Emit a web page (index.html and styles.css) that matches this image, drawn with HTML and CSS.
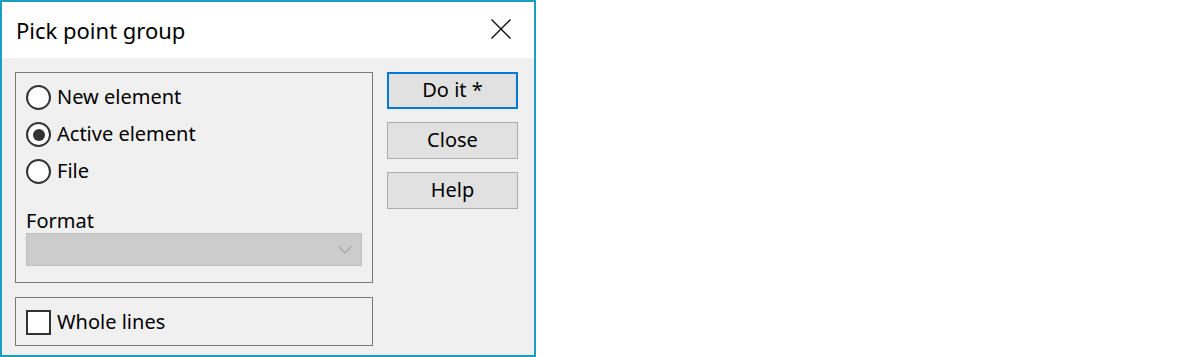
FILE: index.html
```html
<!DOCTYPE html>
<html>
<head>
  <title>Pick point group</title>
  <link rel="stylesheet" href="styles.css">
</head>
<body>
  <div class="window">
    <div class="titlebar">
      <span class="title">Pick point group</span>
      <span class="closeBox">
        <svg width="20" height="20" viewBox="0 0 20 20">
          <path d="M0.5 0.5 L19.5 19.5 M19.5 0.5 L0.5 19.5" stroke="#111" stroke-width="1.4" fill="none"/>
        </svg>
      </span>
    </div>

    <div class="content">
      <div class="leftCol">
        <div class="groupBox sourceGroup">
          <label class="option">
            <span class="radio"></span>
            <span class="optionText">New element</span>
          </label>
          <label class="option">
            <span class="radio checked"></span>
            <span class="optionText">Active element</span>
          </label>
          <label class="option">
            <span class="radio"></span>
            <span class="optionText">File</span>
          </label>

          <div class="formatLabel">Format</div>
          <div class="combo disabled">
            <svg width="14" height="8" viewBox="0 0 14 8">
              <polyline points="0.5,0.5 7,7 13.5,0.5" stroke="#a6a6a6" stroke-width="1.2" fill="none"/>
            </svg>
          </div>
        </div>

        <div class="groupBox linesGroup">
          <label class="option">
            <span class="checkbox"></span>
            <span class="optionText">Whole lines</span>
          </label>
        </div>
      </div>

      <div class="buttonCol">
        <button type="button" class="btn default">Do it *</button>
        <button type="button" class="btn">Close</button>
        <button type="button" class="btn">Help</button>
      </div>
    </div>
  </div>
</body>
</html>
```

FILE: styles.css
```css
body {
  margin: 0;
  background-color: #fff;
  font-family: 'Noto Sans', 'Open Sans', sans-serif;
  color: #000;
}

.window {
  width: 532px;
  height: 353px;
  border: 2px solid #1c9ec1;
  background-color: #f0f0f0;
}

.titlebar {
  height: 56px;
  background-color: #fff;
  display: flex;
  align-items: center;
  justify-content: space-between;
  padding-left: 14px;
  padding-right: 23px;
}

.title {
  font-size: 22px;
  padding-bottom: 1px;
}

.closeBox {
  display: flex;
  width: 20px;
  height: 20px;
  margin-top: -2px;
}

.content {
  display: flex;
  padding: 14px 0 0 13px;
}

.leftCol {
  display: flex;
  flex-direction: column;
  gap: 14px;
  width: 358px;
}

.groupBox {
  border: 1px solid #7a7a7a;
  padding: 0 10px;
}

.sourceGroup {
  padding-top: 6px;
  padding-bottom: 16px;
}

.linesGroup {
  height: 46px;
  display: flex;
  align-items: center;
  padding-top: 1px;
}

.option {
  display: flex;
  align-items: center;
  gap: 6px;
  height: 37px;
  font-size: 20px;
}

.linesGroup .option {
  height: 25px;
}

.optionText {
  line-height: 24px;
  padding-bottom: 1px;
}

.radio {
  width: 21px;
  height: 21px;
  border: 2px solid #333;
  border-radius: 50%;
  background-color: #fff;
  display: flex;
  align-items: center;
  justify-content: center;
  flex-shrink: 0;
}

.radio.checked::after {
  content: '';
  width: 12px;
  height: 12px;
  border-radius: 50%;
  background-color: #333;
}

.checkbox {
  width: 21px;
  height: 21px;
  border: 2px solid #333;
  background-color: #fff;
  flex-shrink: 0;
}

.formatLabel {
  margin-top: 19px;
  font-size: 20px;
  line-height: 24px;
}

.combo {
  height: 31px;
  border: 1px solid #bfbfbf;
  background-color: #cccccc;
  display: flex;
  align-items: center;
  justify-content: flex-end;
  padding-right: 9px;
}

.buttonCol {
  display: flex;
  flex-direction: column;
  gap: 13px;
  margin-left: 14px;
}

.btn {
  width: 131px;
  height: 37px;
  border: 1px solid #adadad;
  background-color: #e1e1e1;
  font-family: 'Noto Sans', 'Open Sans', sans-serif;
  font-size: 20px;
  color: #000;
  padding: 0 0 1px 0;
  line-height: 24px;
}

.btn.default {
  border: 2px solid #0078d7;
}
```
